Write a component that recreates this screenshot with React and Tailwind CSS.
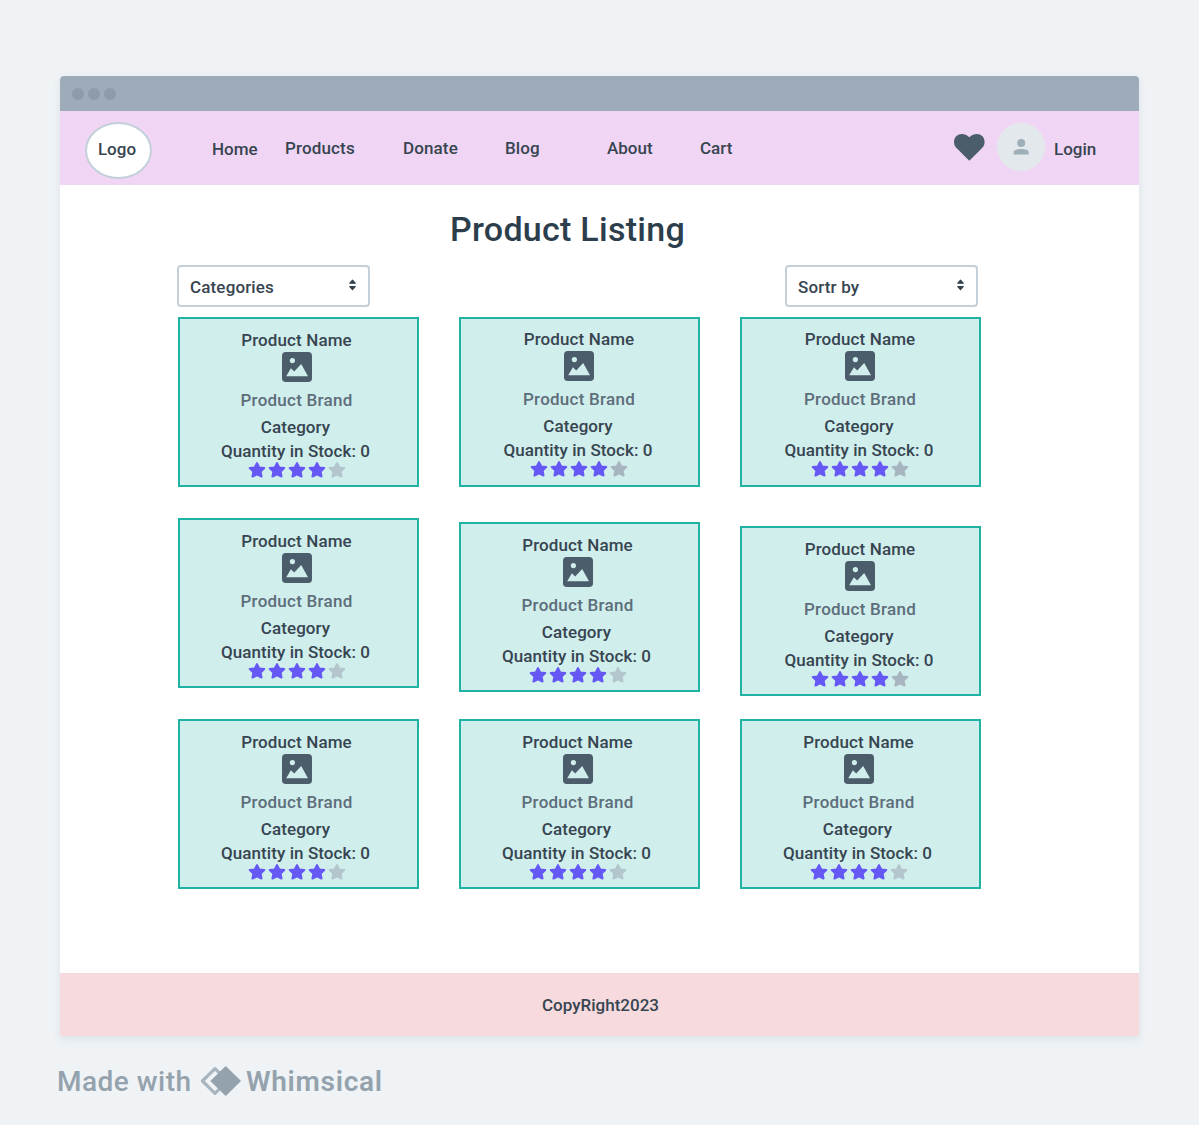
import React from "react";

const NAV = [
  { label: "Home", cls: "w-[73px] pt-px" },
  { label: "Products", cls: "w-[118px] tracking-[0.15px]" },
  { label: "Donate", cls: "w-[102px] tracking-[0.12px]" },
  { label: "Blog", cls: "w-[102px] tracking-[0.12px]" },
  { label: "About", cls: "w-[93px]" },
  { label: "Cart", cls: "w-[60px]" },
];

const ROWS = [
  [
    { offset: "", inset: "pr-1 pt-[11px]" },
    { offset: "", inset: "pr-px pt-[10px]", nudged: true },
    { offset: "", inset: "pr-px pt-[10px]", nudged: true },
  ],
  [
    { offset: "", inset: "pr-1 pt-[11px]" },
    { offset: "mt-1", inset: "pr-1 pt-[11px]" },
    { offset: "mt-2", inset: "pr-px pt-[11px]", nudged: true },
  ],
  [
    { offset: "", inset: "pr-1 pt-[11px]" },
    { offset: "", inset: "pr-1 pt-[11px]" },
    { offset: "", inset: "pr-1 pt-[11px]" },
  ],
];

function PictureIcon() {
  return (
    <svg className="mt-0.5 h-[30px] w-[30px] shrink-0" viewBox="0 0 30 30">
      <rect width="30" height="30" rx="3.8" fill="#4b5c6b" />
      <circle cx="10.4" cy="8.6" r="2.6" fill="#d0eeec" />
      <path d="M4.2 24.3 8.9 16.2 12.2 19.6 19.2 11.9 26 24.3Z" fill="#d0eeec" />
    </svg>
  );
}

function Star({ className }) {
  return (
    <svg className={`h-4 w-5 ${className}`} viewBox="-10 -8 20 16" fill="currentColor">
      <path
        d="M0 -6.8 2.2 -2.5 7.2 -1.9 3.6 1.6 4.5 6.5 0 4.3 -4.5 6.5 -3.6 1.6 -7.2 -1.9 -2.2 -2.5Z"
        stroke="currentColor"
        strokeWidth="2.1"
        strokeLinejoin="round"
      />
    </svg>
  );
}

function ProductCard({ offset, inset, nudged }) {
  return (
    <article className={`h-[170px] w-[241px] border-2 border-[#20b2a2] bg-[#d0eeec] ${offset} ${inset}`}>
      <div className="flex flex-col items-center leading-5">
        <h2 className="tracking-[0.12px]">Product Name</h2>
        <PictureIcon />
        <p className="mt-2 tracking-[0.25px] text-[#5d6d7a]">Product Brand</p>
        <p className="mr-0.5 mt-[7px] tracking-[0.08px]">Category</p>
        <p className="mr-0.5 mt-1 tracking-[0.08px]">Quantity in Stock: 0</p>
        <div className="mt-px flex">
          <Star className="text-[#6558f5]" />
          <Star className="text-[#6558f5]" />
          <Star className="text-[#6558f5]" />
          <Star className="text-[#6558f5]" />
          <Star className={nudged ? "text-[#a6b5bf]" : "text-[#b4c6cd]"} />
        </div>
      </div>
    </article>
  );
}

function Select({ label }) {
  return (
    <button className="flex h-[42px] w-[193px] items-center justify-between rounded border-2 border-[#c3cfd9] bg-white pl-[11px] pr-3 pt-px leading-5 tracking-[0.15px]">
      {label}
      <svg className="-mt-[3px] h-3 w-[7px]" viewBox="0 0 7 12" fill="#35434f">
        <path
          d="M0.8 4.2 3.5 1.2 6.2 4.2Z M0.8 7.7H6.2L3.5 10.7Z"
          stroke="#35434f"
          strokeWidth="1.2"
          strokeLinejoin="round"
        />
      </svg>
    </button>
  );
}

export default function App() {
  return (
    <div className="h-[1125px] w-[1199px] bg-[#eff3f6] pt-[76px] font-['Roboto',sans-serif] text-[17px] font-medium text-[#374551]">
      <div className="ml-[60px] flex h-[960px] w-[1079px] flex-col overflow-hidden rounded-t bg-white shadow-[0_3px_8px_rgba(60,80,100,0.1)]">
        <div className="flex h-[35px] shrink-0 items-center gap-1 bg-[#9dacb8] pl-3">
          <span className="h-3 w-3 rounded-full bg-[#8d9cab]" />
          <span className="h-3 w-3 rounded-full bg-[#8d9cab]" />
          <span className="h-3 w-3 rounded-full bg-[#8d9cab]" />
        </div>

        <header className="flex h-[74px] shrink-0 items-start bg-[#f0d6f4] leading-5">
          <div className="ml-[25px] mt-[11px] flex h-[57px] w-[67px] items-center justify-center rounded-[50%] border-2 border-[#c3cfd9] bg-white pb-[3px] pr-[3px]">
            Logo
          </div>
          <nav className="ml-[60px] mt-[27px] flex w-[742px]">
            {NAV.map((item) => (
              <a key={item.label} className={item.cls}>
                {item.label}
              </a>
            ))}
          </nav>
          <svg className="mt-[23px] h-[27px] w-[31px]" viewBox="0 0 31 27" fill="#4b5c6b">
            <path d="M15.3 26.8 2.5 14.1C-0.9 10.7 -0.7 5 2.4 2.1 5.6 -0.8 10.9 -0.9 15.3 3.3 19.7 -0.9 25 -0.8 28.2 2.1 31.3 5 31.5 10.7 28.1 14.1Z" />
          </svg>
          <div className="ml-3 mt-[11.5px] flex h-12 w-12 items-center justify-center rounded-full bg-[#e2e8eb]">
            <svg className="h-4 w-4" viewBox="0 0 16 16" fill="#9fafba">
              <circle cx="8.2" cy="4" r="4" />
              <path d="M0.7 15.6V13.3C0.7 11 4.5 10.1 8.2 10.1S15.7 11 15.7 13.3V15.6Z" />
            </svg>
          </div>
          <a className="ml-[9px] mt-7">Login</a>
        </header>

        <main className="flex-1 pl-[117px]">
          <h1 className="ml-[273px] mt-6 text-[34px] font-medium leading-10 tracking-[0.27px] text-[#2c3e4c]">
            Product Listing
          </h1>
          <div className="mt-4 flex gap-[415px]">
            <Select label="Categories" />
            <Select label="Sortr by" />
          </div>
          <div className="ml-px mt-2.5 flex flex-col gap-[31px]">
            {ROWS.map((row, r) => (
              <div key={r} className="flex h-[170px] items-start gap-10">
                {row.map((card, c) => (
                  <ProductCard key={c} {...card} />
                ))}
              </div>
            ))}
          </div>
        </main>

        <footer className="flex h-[63px] shrink-0 items-center justify-center bg-[#f6dadd] pl-0.5 pt-0.5">
          CopyRight2023
        </footer>
      </div>

      <div className="ml-[57px] mt-[29px] flex h-8 items-center text-[28px] leading-8 text-[#94a2ad]">
        <span className="w-[143px] pt-0.5 tracking-[0.5px]">Made with</span>
        <svg className="h-[31px] w-[41px]" viewBox="0 0 41 31">
          <path
            d="M15 2.7 2.4 15 15 27.3 27.6 15Z"
            fill="none"
            stroke="#a9b5be"
            strokeWidth="3.2"
            strokeLinejoin="round"
          />
          <path
            d="M25.7 1.2 11.4 15 25.7 28.8 40 15Z"
            fill="#94a2ad"
            stroke="#94a2ad"
            strokeWidth="1.6"
            strokeLinejoin="round"
          />
        </svg>
        <span className="ml-[5px] pt-0.5 font-semibold tracking-[0.7px]">Whimsical</span>
      </div>
    </div>
  );
}
